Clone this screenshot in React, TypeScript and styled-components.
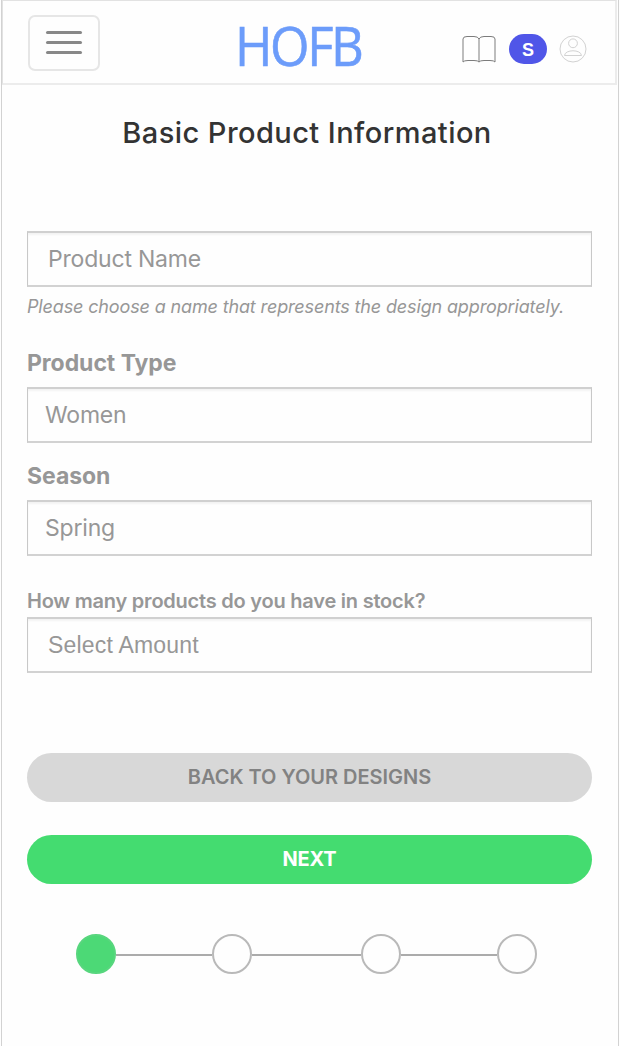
import React from "react";
import styled, { createGlobalStyle } from "styled-components";

const GlobalStyle = createGlobalStyle`
  * { box-sizing: border-box; }
  body { margin: 0; background: #fefefe; font-family: Inter, "Liberation Sans", sans-serif; }
`;

const Page = styled.div`
  width: 620px;
  height: 1046px;
  overflow: hidden;
  padding: 0 1px;
  background: #fefefe;
`;

const Frame = styled.div`
  height: 100%;
  width: 618px;
  border-left: 1px solid #d2d2d2;
  border-right: 1px solid #d2d2d2;
`;

const Header = styled.header`
  display: flex;
  align-items: flex-start;
  height: 85px;
  width: 615px;
  border: 1px solid #e2e2e2;
  border-bottom: 2px solid #ececec;
  border-right: 2px solid #ececec;
  padding-left: 25px;
`;

const MenuButton = styled.button`
  display: flex;
  flex-direction: column;
  align-items: center;
  gap: 7px;
  width: 72px;
  height: 56px;
  margin-top: 14px;
  padding: 14px 0 0;
  background: #fefefe;
  border: 2px solid #e6e6e6;
  border-radius: 7px;
`;

const MenuBar = styled.span`
  width: 36px;
  height: 3px;
  border-radius: 1.5px;
  background: #888;
`;

const Logo = styled.div`
  width: 130px;
  margin: 7px 0 0 135px;
  font: 400 54px/74px "Open Sans", sans-serif;
  letter-spacing: -2.5px;
  color: #6c9cfa;
  -webkit-text-stroke: 0.6px #6c9cfa;
  transform: scaleX(0.94);
  transform-origin: left center;
  white-space: nowrap;
`;

const HeaderTools = styled.div`
  display: flex;
  align-items: center;
  height: 30px;
  margin: 33px 0 0 97px;
`;

const Initial = styled.span`
  width: 38px;
  height: 30px;
  margin: 0 12px 0 13px;
  border-radius: 15px;
  background: #5056e8;
  color: #fff;
  text-align: center;
  font: 700 18px/32px "Liberation Sans", sans-serif;
`;

const Form = styled.main`
  display: flex;
  flex-direction: column;
  padding: 0 26px 0 25px;
`;

const Title = styled.h1`
  margin: 28px 5px 0 0;
  height: 40px;
  text-align: center;
  font-size: 29px;
  line-height: 40px;
  font-weight: 500;
  letter-spacing: 0.44px;
  color: #333;
  white-space: nowrap;
`;

const Label = styled.label<{ $top: number; $small?: boolean }>`
  height: 24px;
  margin-top: ${(p) => p.$top}px;
  font-size: ${(p) => (p.$small ? 20 : 23)}px;
  line-height: 24px;
  font-weight: ${(p) => (p.$small ? 600 : 700)};
  letter-spacing: ${(p) => (p.$small ? -0.22 : -0.05)}px;
  color: #979797;
`;

const Field = styled.div<{ $top: number; $indent?: number; $spacing?: number; $face?: string }>`
  height: 56px;
  margin-top: ${(p) => p.$top}px;
  padding-left: ${(p) => p.$indent ?? 17}px;
  border: solid #c8c8c8;
  border-width: 2px 1px;
  border-top-color: #d0d0d0;
  border-bottom-color: #d2d2d2;
  box-shadow: inset 0 2px 2px #f3f3f3;
  font-family: ${(p) => p.$face ?? "Inter"}, sans-serif;
  font-size: 23px;
  line-height: 52px;
  letter-spacing: ${(p) => p.$spacing ?? -0.2}px;
  color: #979797;
`;

const Hint = styled.p`
  margin: 8px 0 0;
  height: 24px;
  font-size: 18px;
  line-height: 24px;
  font-style: italic;
  letter-spacing: -0.14px;
  color: #979797;
  white-space: nowrap;
`;

const Action = styled.button<{ $primary?: boolean }>`
  height: 49px;
  margin-top: ${(p) => (p.$primary ? 33 : 80)}px;
  padding: 0;
  border: 0;
  border-radius: 25px;
  background: ${(p) => (p.$primary ? "#44dc70" : "#d8d8d8")};
  color: ${(p) => (p.$primary ? "#fff" : "#828282")};
  font-family: Inter, sans-serif;
  font-size: 20px;
  line-height: 49px;
  font-weight: ${(p) => (p.$primary ? 700 : 600)};
  letter-spacing: ${(p) => (p.$primary ? -0.2 : -0.02)}px;
`;

const Steps = styled.div`
  display: flex;
  align-items: center;
  margin: 49.5px 0 0 49.4px;
`;

const Step = styled.span<{ $active?: boolean }>`
  width: 40px;
  height: 40px;
  border-radius: 50%;
  border: 2px solid ${(p) => (p.$active ? "#58d67e" : "#b9b9b9")};
  background: ${(p) => (p.$active ? "#4cd976" : "#fefefe")};
`;

const Connector = styled.span<{ $width: number }>`
  width: ${(p) => p.$width}px;
  height: 2px;
  margin-top: 3px;
  background: #ababab;
`;

export default function App() {
  return (
    <Page>
      <GlobalStyle />
      <Frame>
        <Header>
          <MenuButton aria-label="Menu">
            <MenuBar />
            <MenuBar />
            <MenuBar />
          </MenuButton>
          <Logo>HOFB</Logo>
          <HeaderTools>
            <svg width="34" height="30" viewBox="0 0 34 30" fill="none" stroke="#7c7c7c" strokeWidth="1">
              <path d="M17 28V5Q16 2.5 12 2.5H5Q1 2.5 1 5V28M17 5Q18 2.5 22 2.5H29Q33 2.5 33 5V28" />
              <path d="M1 28Q2 26.5 6 26.5H12Q16 26.5 17 28Q18 26.5 22 26.5H28Q32 26.5 33 28" />
            </svg>
            <Initial>S</Initial>
            <svg width="28" height="28" viewBox="0 0 28 28" fill="none" stroke="#d2d2d2" strokeWidth="1">
              <circle cx="14" cy="14" r="13" />
              <circle cx="14" cy="8.3" r="4.4" />
              <path d="M5.5 20.5C6 14.2 22 14.2 22.5 20.5Z" />
            </svg>
          </HeaderTools>
        </Header>
        <Form>
          <Title>Basic Product Information</Title>
          <Field $top={78} $indent={20}>Product Name</Field>
          <Hint>Please choose a name that represents the design appropriately.</Hint>
          <Label $top={32}>Product Type</Label>
          <Field $top={12}>Women</Field>
          <Label $top={21}>Season</Label>
          <Field $top={12}>Spring</Field>
          <Label $top={33} $small>How many products do you have in stock?</Label>
          <Field $top={4} $indent={20} $spacing={0.2} $face='"Liberation Sans"'>Select Amount</Field>
          <Action>BACK TO YOUR DESIGNS</Action>
          <Action $primary>NEXT</Action>
          <Steps>
            <Step $active />
            <Connector $width={96} />
            <Step />
            <Connector $width={109} />
            <Step />
            <Connector $width={96} />
            <Step />
          </Steps>
        </Form>
      </Frame>
    </Page>
  );
}
